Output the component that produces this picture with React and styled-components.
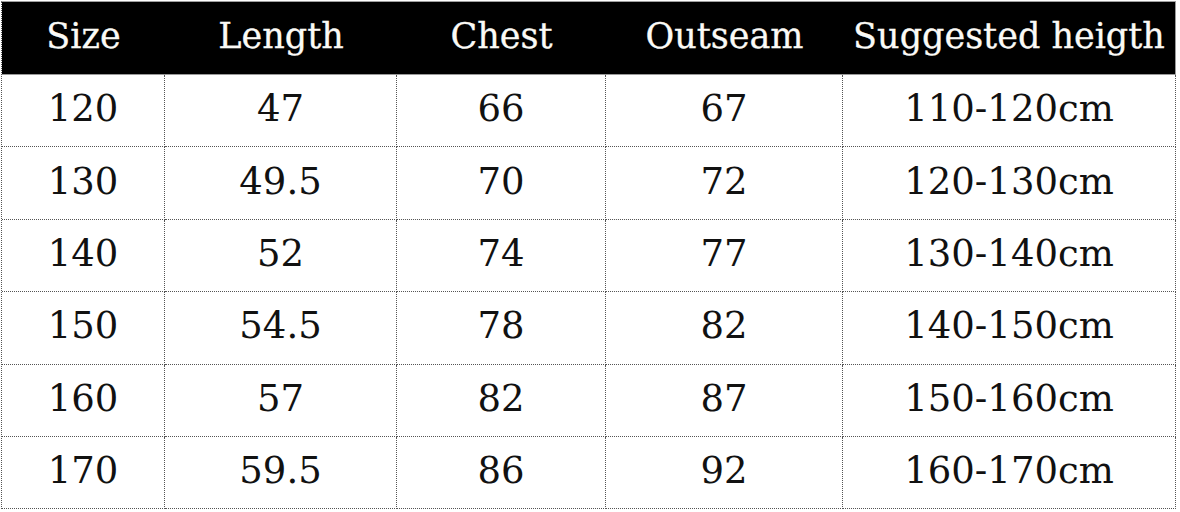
import React from "react";
import styled, { createGlobalStyle } from "styled-components";

const GlobalStyle = createGlobalStyle`
  html, body {
    margin: 0;
    padding: 0;
    background: #ffffff;
  }
  body {
    font-family: "DejaVu Serif", "Liberation Serif", serif;
  }
`;

const Page = styled.div`
  width: 1180px;
  height: 512px;
  padding: 1px 0 0 1px;
  box-sizing: border-box;
  background: #fff;
  overflow: hidden;
`;

const Table = styled.div`
  display: grid;
  grid-template-columns: 163px 232px 209px 237px 333px;
  grid-template-rows: 73px repeat(6, 72.4px);
  border-left: 1px dotted #555;
  border-top: 1px solid #a0a0a0;
  width: 1175px;
  box-sizing: border-box;
`;

const HeadCell = styled.div`
  display: flex;
  align-items: center;
  justify-content: center;
  padding-bottom: 4px;
  box-sizing: border-box;
  background: #000;
  color: #fbfaf6;
  font-size: 35px;
  white-space: nowrap;
  -webkit-text-stroke: 0.3px #fbfaf6;
  border-bottom: 1px solid #9a9a9a;
  border-right: ${(p) => (p.last ? "1px solid #9a9a9a" : "none")};
`;

const Cell = styled.div`
  display: flex;
  align-items: center;
  justify-content: center;
  padding-bottom: 4px;
  box-sizing: border-box;
  color: #111;
  font-size: 37px;
  white-space: nowrap;
  border-right: 1px dotted #555;
  border-bottom: 1px dotted #555;
`;

const headers = ["Size", "Length", "Chest", "Outseam", "Suggested heigth"];

const rows = [
  ["120", "47", "66", "67", "110-120cm"],
  ["130", "49.5", "70", "72", "120-130cm"],
  ["140", "52", "74", "77", "130-140cm"],
  ["150", "54.5", "78", "82", "140-150cm"],
  ["160", "57", "82", "87", "150-160cm"],
  ["170", "59.5", "86", "92", "160-170cm"],
];

export default function App() {
  return (
    <>
      <GlobalStyle />
      <Page>
        <Table>
          {headers.map((h, i) => (
            <HeadCell key={h} last={i === headers.length - 1}>
              {h}
            </HeadCell>
          ))}
          {rows.map((row, r) =>
            row.map((v, c) => <Cell key={r + "-" + c}>{v}</Cell>)
          )}
        </Table>
      </Page>
    </>
  );
}
